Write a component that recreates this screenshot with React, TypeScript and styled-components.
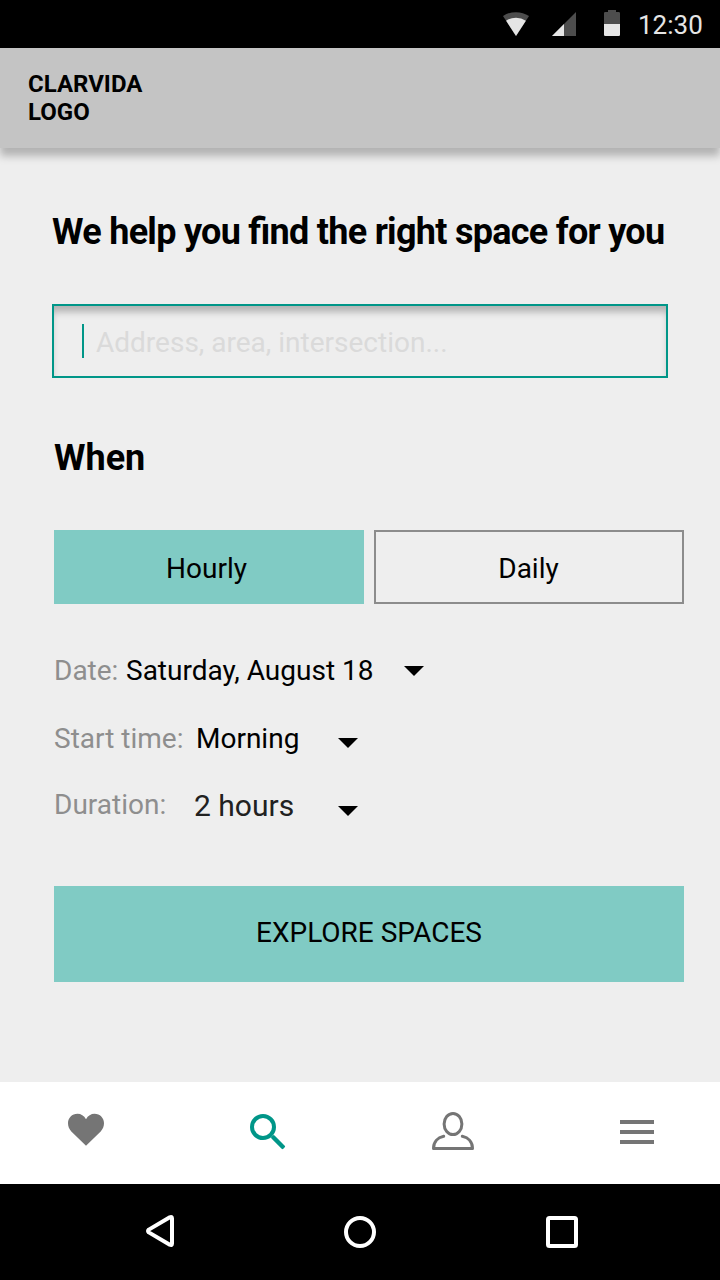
import React from "react";
import styled, { createGlobalStyle } from "styled-components";

const GlobalStyle = createGlobalStyle`
  * { box-sizing: border-box; }
  body { margin: 0; background: #eeeeee; font-family: Roboto, "Liberation Sans", sans-serif; }
  h1, h2 { margin: 0; }
  button { font-family: inherit; padding: 0; margin: 0; border: 0; background: none; border-radius: 0; }
  svg { display: block; flex: none; }
`;

const Screen = styled.div`
  width: 720px;
  height: 1280px;
  display: flex;
  flex-direction: column;
  overflow: hidden;
  background: #eeeeee;
  color: #000;
`;

const StatusBar = styled.div`
  height: 48px;
  flex: none;
  padding-left: 503px;
  display: flex;
  align-items: center;
  background: #000;
`;

const Clock = styled.span`
  margin-left: 17px;
  color: #e5e5e5;
  font-size: 26px;
  line-height: 32px;
  padding-top: 2px;
`;

const Header = styled.header`
  height: 100px;
  flex: none;
  padding: 22px 28px;
  background: #c4c4c4;
  box-shadow: 0 8px 8px rgba(0, 0, 0, 0.25);
`;

const Logo = styled.div`
  width: 130px;
  font-size: 24px;
  line-height: 28px;
  font-weight: 700;
`;

const Content = styled.main`
  flex: 1;
  padding: 63px 36px 0 54px;
  display: flex;
  flex-direction: column;
  align-items: stretch;
`;

const Title = styled.h1`
  margin-left: -2px;
  font-size: 36px;
  line-height: 42px;
  font-weight: 700;
  letter-spacing: -0.72px;
  font-feature-settings: "liga" 1;
  white-space: nowrap;
`;

const SearchField = styled.div`
  width: 616px;
  height: 74px;
  margin: 51px 0 0 -2px;
  padding-left: 30px;
  display: flex;
  align-items: center;
  gap: 12px;
  box-shadow: inset 0 0 0 2px #009688, inset 0 8px 7px rgba(0, 0, 0, 0.25);
`;

const Caret = styled.span`
  width: 2px;
  height: 34px;
  background: #009688;
`;

const Placeholder = styled.span`
  padding-top: 4px;
  color: #dadada;
  font-size: 28px;
  line-height: 32px;
`;

const Subtitle = styled.h2`
  margin-top: 59px;
  font-size: 36px;
  line-height: 42px;
  font-weight: 700;
`;

const Toggle = styled.div`
  margin-top: 51px;
  display: flex;
  gap: 10px;
`;

const ToggleButton = styled.button<{ $active?: boolean }>`
  flex: 1;
  height: 74px;
  padding: 3px ${(p) => (p.$active ? 5 : 1)}px 0 0;
  color: #000;
  font-size: 28px;
  line-height: 32px;
  background: ${(p) => (p.$active ? "#80cbc4" : "transparent")};
  border: ${(p) => (p.$active ? "0" : "2px solid #8c8c8c")};
`;

const Fields = styled.div`
  margin-top: 50px;
  display: flex;
  flex-direction: column;
`;

const Field = styled.div<{ $height: number }>`
  height: ${(p) => p.$height}px;
  display: flex;
  align-items: flex-start;
`;

const Label = styled.span<{ $width: number }>`
  width: ${(p) => p.$width}px;
  color: #8e8e8e;
  font-size: 28px;
  line-height: 33px;
  white-space: nowrap;
`;

const Value = styled.span<{ $width: number; $large?: boolean }>`
  width: ${(p) => p.$width}px;
  color: ${(p) => (p.$large ? "#212121" : "#000")};
  font-size: ${(p) => (p.$large ? 30 : 28)}px;
  line-height: ${(p) => (p.$large ? 35 : 33)}px;
  white-space: nowrap;
`;

const Arrow = styled.svg<{ $top: number }>`
  margin-top: ${(p) => p.$top}px;
`;

const Explore = styled.button`
  height: 96px;
  margin-top: 30px;
  padding-bottom: 3px;
  background: #80cbc4;
  color: #000;
  font-size: 28px;
  line-height: 33px;
`;

const TabBar = styled.nav`
  height: 102px;
  flex: none;
  padding: 0 66px 4px 68px;
  display: flex;
  justify-content: space-between;
  align-items: center;
  background: #fff;
`;

const SystemBar = styled.div`
  height: 96px;
  flex: none;
  padding: 0 142px;
  display: flex;
  justify-content: space-between;
  align-items: center;
  background: #000;
`;

const StatusIcons = () => (
  <svg width="118" height="28" viewBox="503 10 118 28">
    <path d="M503 16A22 20 0 0 1 529 16L516 36Z" fill="#4d4d4d" />
    <path d="M506.1 20.7A18 18 0 0 1 525.9 20.7L516 36Z" fill="#e5e5e5" />
    <path d="M552 36L576 12V36Z" fill="#4d4d4d" />
    <path d="M552 36L564 24V36Z" fill="#e5e5e5" />
    <path d="M608 10h8v2h2.7a1.3 1.3 0 0 1 1.3 1.3V24h-16V13.3a1.3 1.3 0 0 1 1.3-1.3H608Z" fill="#4d4d4d" />
    <path d="M604 24h16v10.7a1.3 1.3 0 0 1-1.3 1.3h-13.4a1.3 1.3 0 0 1-1.3-1.3Z" fill="#e5e5e5" />
  </svg>
);

const fields = [
  { label: "Date:", value: "Saturday, August 18", large: false, labelWidth: 72, valueWidth: 278, height: 68, arrowTop: 12 },
  { label: "Start time:", value: "Morning", large: false, labelWidth: 142, valueWidth: 142, height: 66, arrowTop: 16 },
  { label: "Duration:", value: "2 hours", large: true, labelWidth: 140, valueWidth: 144, height: 68, arrowTop: 18 },
];

export default function App() {
  return (
    <Screen>
      <GlobalStyle />
      <StatusBar>
        <StatusIcons />
        <Clock>12:30</Clock>
      </StatusBar>
      <Header>
        <Logo>CLARVIDA LOGO</Logo>
      </Header>
      <Content>
        <Title>We help you find the right space for you</Title>
        <SearchField>
          <Caret />
          <Placeholder>Address, area, intersection...</Placeholder>
        </SearchField>
        <Subtitle>When</Subtitle>
        <Toggle>
          <ToggleButton $active>Hourly</ToggleButton>
          <ToggleButton>Daily</ToggleButton>
        </Toggle>
        <Fields>
          {fields.map((f) => (
            <Field key={f.label} $height={f.height}>
              <Label $width={f.labelWidth}>{f.label}</Label>
              <Value $width={f.valueWidth} $large={f.large}>{f.value}</Value>
              <Arrow $top={f.arrowTop} width="20" height="10" viewBox="0 0 20 10">
                <path d="M0 0H20L10 10Z" />
              </Arrow>
            </Field>
          ))}
        </Fields>
        <Explore>EXPLORE SPACES</Explore>
      </Content>
      <TabBar>
        <svg width="36" height="38" viewBox="68 1112 36 38">
          <path
            d="M86 1119.2C84 1115.8 81 1113.8 77.5 1113.8C72 1113.8 68 1118 68 1123.3C68 1126.6 69.2 1129.2 71.3 1131.4L86 1145.8L100.7 1131.4C102.8 1129.2 104 1126.6 104 1123.3C104 1118 100 1113.8 94.5 1113.8C91 1113.8 88 1115.8 86 1119.2Z"
            fill="#757575"
          />
        </svg>
        <svg width="36" height="38" viewBox="250 1112 36 38">
          <circle cx="263" cy="1127" r="11" fill="none" stroke="#009688" strokeWidth="4" />
          <rect x="-8.4" y="-2.2" width="16.8" height="4.4" rx="1.2" transform="translate(278.1 1142.1) rotate(45)" fill="#009688" />
        </svg>
        <svg width="42" height="38" viewBox="432 1112 42 38" fill="none" stroke="#757575" strokeWidth="3" strokeLinecap="round" strokeLinejoin="round">
          <ellipse cx="453" cy="1124" rx="8.9" ry="10.5" />
          <path d="M443.7 1136.3C437.5 1137.5 433.5 1142 433.5 1148.5H472.5C472.5 1142 468.5 1137.5 462.3 1136.3" />
        </svg>
        <svg width="34" height="38" viewBox="620 1112 34 38">
          <path d="M620 1120h34v4h-34zM620 1130h34v4h-34zM620 1140h34v4h-34z" fill="#757575" />
        </svg>
      </TabBar>
      <SystemBar>
        <svg width="32" height="36" viewBox="142 1214 32 36" fill="none" stroke="#fff" strokeWidth="4" strokeLinejoin="round">
          <path d="M148.8 1229.6L169.8 1217.2Q172 1216.2 172 1218.4V1243.6Q172 1245.8 169.8 1244.8L148.8 1232.4Q147.2 1231 148.8 1229.6Z" />
        </svg>
        <svg width="32" height="36" viewBox="344 1214 32 36" fill="none" stroke="#fff" strokeWidth="4">
          <circle cx="360" cy="1232" r="14" />
        </svg>
        <svg width="32" height="36" viewBox="546 1214 32 36" fill="none" stroke="#fff" strokeWidth="4">
          <rect x="548" y="1218" width="28" height="28" rx="1.5" />
        </svg>
      </SystemBar>
    </Screen>
  );
}
